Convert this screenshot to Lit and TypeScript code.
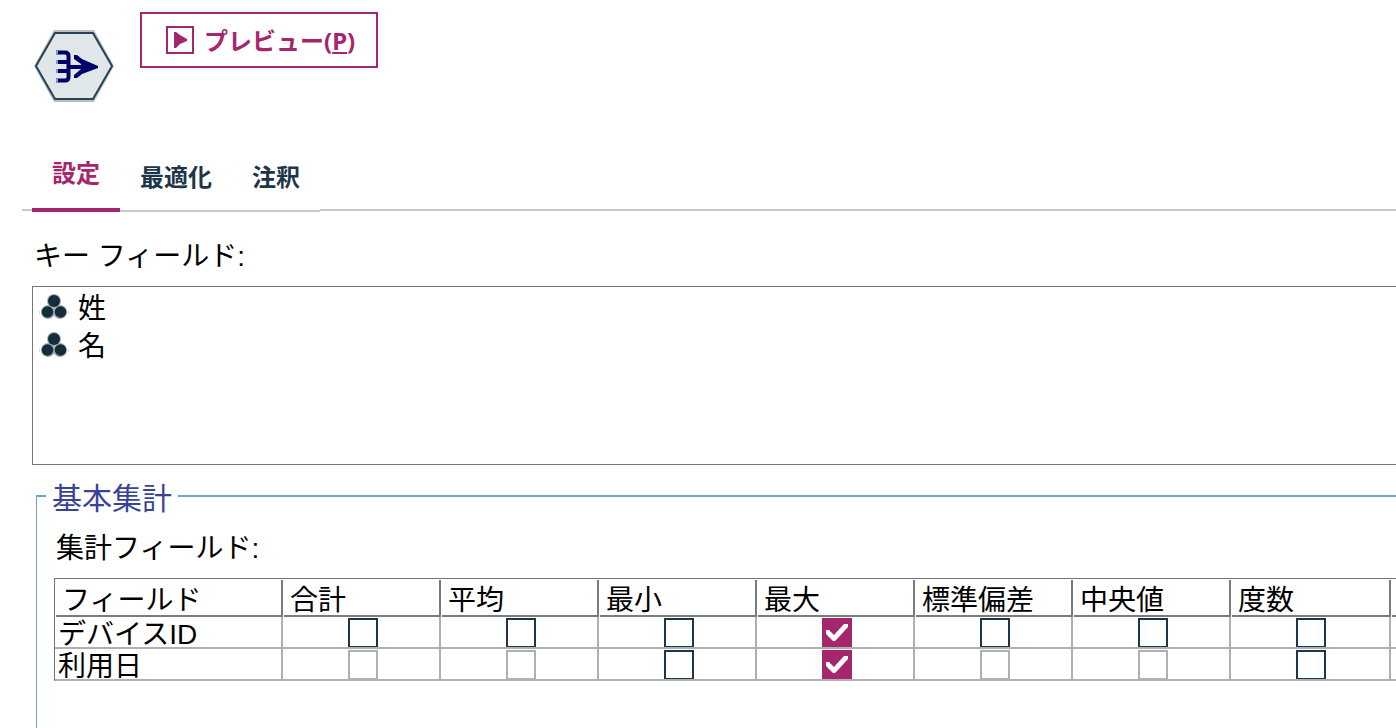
import { LitElement, html, css, svg } from "lit";
import { customElement, state } from "lit/decorators.js";
import { classMap } from "lit/directives/class-map.js";

type Flag = "on" | "off" | "disabled";

interface Row {
  name: string;
  flags: Flag[];
}

const COLUMNS = ["合計", "平均", "最小", "最大", "標準偏差", "中央値", "度数"];

const circles = svg`
  <g fill="#9fabb3"><circle cx="14" cy="7" r="7"/><circle cx="8" cy="18" r="7"/><circle cx="20" cy="18" r="7"/></g>
  <g fill="#162c38"><circle cx="14" cy="7" r="6"/><circle cx="7.500" cy="18" r="5.800"/><circle cx="20.500" cy="18" r="5.800"/></g>
  <path fill="#d5dade" d="M-1 17h1v3h-1zM28 17h1v3h-1z"/>`;

@customElement("app-root")
export class AppRoot extends LitElement {
  static styles = css`
    :host {
      display: flex;
      flex-direction: column;
      min-height: 100vh;
      box-sizing: border-box;
      overflow: hidden;
      background: #fff;
      color: #000;
      font: 28px/38px "Liberation Sans", "Noto Sans CJK JP", sans-serif;
    }
    * {
      box-sizing: border-box;
    }
    .header {
      display: flex;
      align-items: flex-start;
      gap: 26px;
      padding: 12px 34px 0;
      height: 140px;
    }
    .node {
      width: 80px;
      height: 72px;
      margin-top: 18px;
      flex: none;
    }
    .preview {
      display: flex;
      align-items: center;
      gap: 10px;
      height: 56px;
      padding: 0 21px 0 24px;
      border: 2px solid #a6266e;
      background: #fff;
      color: #a6266e;
      font: bold 24px/36px "Noto Sans", "Noto Sans CJK JP", sans-serif;
      white-space: nowrap;
    }
    .preview svg {
      width: 28px;
      height: 28px;
      flex: none;
    }
    .text {
      padding-top: 2px;
    }
    .key {
      text-decoration: underline;
      text-decoration-thickness: 2px;
      text-underline-offset: 2px;
    }
    .tabs {
      display: flex;
      height: 72px;
      padding-left: 10px;
      margin-left: 22px;
      background: linear-gradient(#c8c8c8, #c8c8c8) 0 69px / 100% 2px no-repeat;
    }
    .tab {
      padding: 2px 20px 0;
      border: 0;
      border-bottom: 2px solid #c8c8c8;
      background: #fff;
      color: #1d3649;
      font: bold 24px/36px "Noto Sans CJK JP", sans-serif;
    }
    .tab.active {
      padding: 0 20px 4px;
      color: #a6266e;
      border-bottom: 4px solid #a6266e;
    }
    .label {
      padding-left: 34px;
      margin-top: 26px;
    }
    .list {
      list-style: none;
      margin: 10px 0 0 32px;
      padding: 3px 0 0 7px;
      min-height: 179px;
      border: 1px solid #767676;
      border-right: 0;
    }
    .item {
      display: flex;
      gap: 10px;
    }
    .item svg {
      width: 28px;
      height: 24px;
      margin-top: 4px;
      overflow: visible;
    }
    .group {
      display: flex;
      flex-direction: column;
      flex: 1;
      min-width: 0;
      margin: 10px 0 0 36px;
      padding: 0 0 0 9px;
      border: 0 solid #6fa3d0;
      border-width: 2px 0 0 1px;
    }
    .legend {
      padding: 6px 6px 0;
      color: #38439a;
      font-size: 30px;
      line-height: 36px;
    }
    .caption {
      padding: 13px 0 0 10px;
    }
    .panel {
      flex: 1;
      margin: 10px 0 0 8px;
      border: 1px solid #767676;
      border-width: 1px 0 0 1px;
    }
    table {
      table-layout: fixed;
      width: 100%;
      border-spacing: 0;
    }
    .first {
      width: 228px;
    }
    .col {
      width: 158px;
    }
    .last {
      width: 160px;
    }
    th {
      padding: 1px 0 0 1px;
      font-weight: normal;
      text-align: left;
      white-space: nowrap;
    }
    .head {
      display: block;
      height: 37px;
      padding: 2px 0 0 6px;
      border: 0 solid #7b7b7b;
      border-width: 0 2px 2px 0;
    }
    .rest .head {
      border-right: 0;
      padding: 0;
    }
    td,
    .name {
      height: 32px;
      padding: 0;
      border: 0 solid #b0b0b0;
      border-width: 0 2px 2px 0;
      vertical-align: top;
    }
    .name {
      padding: 5px 0 0 3px;
      line-height: 25px;
    }
    .rest {
      border-right: 0;
    }
    .check {
      appearance: none;
      display: block;
      width: 30px;
      height: 29px;
      margin: 1px 0 0 65px;
      border: 2px solid #1d3649;
      border-bottom-width: 1px;
      border-radius: 0;
      background: #fff;
    }
    .check:disabled {
      border-color: #b0b0b0;
    }
    .check:checked {
      border: 0;
      background: #a6266e;
    }
    .check:checked::before {
      content: "";
      display: block;
      width: 30px;
      height: 29px;
      background: #fff;
      clip-path: polygon(4px 12px, 7px 12px, 12px 17px, 22px 6px, 26px 6px, 26px 9px, 15px 21px, 13px 23px, 11px 23px, 4px 16px);
    }
  `;

  @state() private tab = 0;

  private tabs = ["設定", "最適化", "注釈"];
  private keys = ["姓", "名"];
  private rows: Row[] = [
    { name: "デバイスID", flags: ["off", "off", "off", "on", "off", "off", "off"] },
    { name: "利用日", flags: ["disabled", "disabled", "off", "on", "disabled", "disabled", "off"] },
  ];

  render() {
    return html`
      <header class="header">
        <svg class="node" viewBox="0 0 80 72" aria-hidden="true">
          <path d="M20 0H60L80 36L60 72H20L0 36Z" fill="#b5c0c7" />
          <path d="M21 3H59L78 36L59 69H21L2 36Z" fill="#e1e6e9" stroke="#284356" stroke-width="2" />
          <path d="M22 22.500h9q3.500 0 3.500 3.500v21q0 3.500 -3.500 3.500H22M22 32h12M22 41h12M35 37h14" fill="none" stroke="#00006b" stroke-width="4" />
          <path d="M23 20.500v4M23 30v4M23 39v4M23 48.500v4" stroke="#6ba4cf" stroke-width="2" />
          <path d="M40 25h3l5 4 16 7v2l-16 6-5 4h-3v-3l7-6v-5l-7-5z" fill="#00006b" />
        </svg>
        <button class="preview" type="button">
          <svg viewBox="0 0 28 28" aria-hidden="true">
            <path d="M1 1H27V27H1Z" fill="none" stroke="#a6266e" stroke-width="2" />
            <path d="M8 6h2l4 3 7 4v2l-7 3-4 4h-2z" fill="#a6266e" />
          </svg>
          <span class="text">プレビュー(<span class="key">P</span>)</span>
        </button>
      </header>
      <nav class="tabs" role="tablist">
        ${this.tabs.map(
          (t, i) => html`<button
            type="button"
            role="tab"
            aria-selected=${i === this.tab}
            class=${classMap({ tab: true, active: i === this.tab })}
            @click=${() => (this.tab = i)}
          >${t}</button>`
        )}
      </nav>
      <div class="label" id="keys">キー フィールド:</div>
      <ul class="list" role="listbox" aria-labelledby="keys">
        ${this.keys.map(
          (k) => html`<li class="item" role="option">
            <svg viewBox="0 0 28 24" aria-hidden="true">${circles}</svg>${k}
          </li>`
        )}
      </ul>
      <fieldset class="group">
        <legend class="legend">基本集計</legend>
        <div class="caption" id="fields">集計フィールド:</div>
        <div class="panel">
          <table aria-labelledby="fields">
            <colgroup>
              <col class="first" />
              ${COLUMNS.map((_, i) => html`<col class=${i === COLUMNS.length - 1 ? "last" : "col"} />`)}
              <col />
            </colgroup>
            <thead>
              <tr>
                <th scope="col"><span class="head">フィールド</span></th>
                ${COLUMNS.map((c) => html`<th scope="col"><span class="head">${c}</span></th>`)}
                <th class="rest"><span class="head"></span></th>
              </tr>
            </thead>
            <tbody>
              ${this.rows.map(
                (r) => html`<tr>
                  <th class="name" scope="row">${r.name}</th>
                  ${r.flags.map(
                    (f, i) => html`<td>
                      <input
                        class="check"
                        type="checkbox"
                        aria-label=${`${r.name} ${COLUMNS[i]}`}
                        ?checked=${f === "on"}
                        ?disabled=${f === "disabled"}
                      />
                    </td>`
                  )}
                  <td class="rest"></td>
                </tr>`
              )}
            </tbody>
          </table>
        </div>
      </fieldset>
    `;
  }
}
